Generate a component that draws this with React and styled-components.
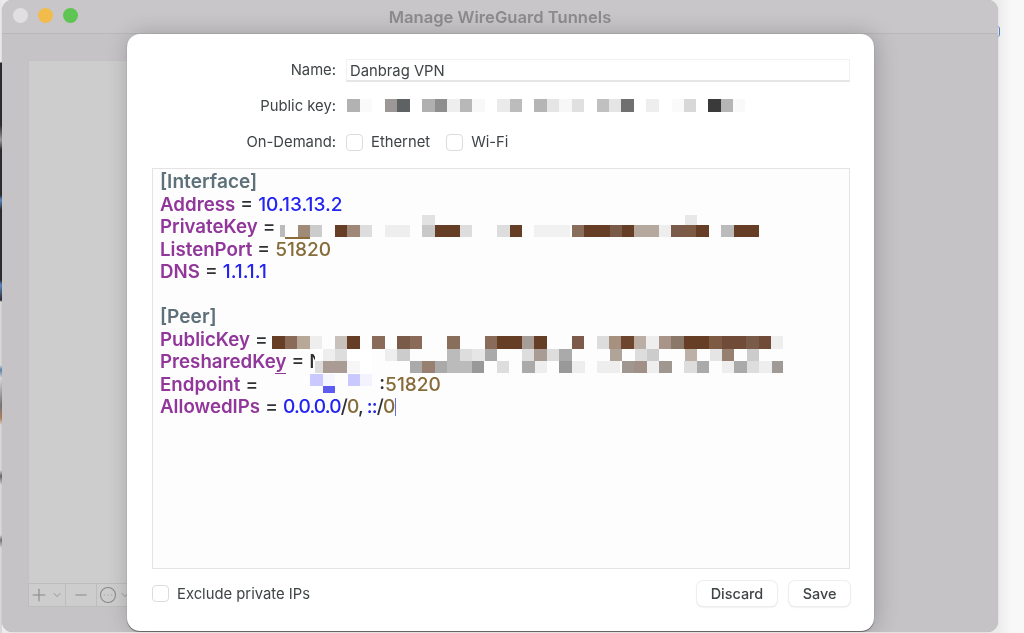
import React from "react";
import styled, { createGlobalStyle } from "styled-components";
import { Plus, Minus, ChevronDown, CircleEllipsis } from "lucide-react";

const Global = createGlobalStyle`
  html, body { margin: 0; padding: 0; background: #f7f7f7; }
  body { font-family: Inter, "Liberation Sans", sans-serif; }
`;

const Page = styled.div`
  position: relative;
  display: flex;
  width: 1024px;
  height: 633px;
  overflow: hidden;
  background: linear-gradient(90deg, #ececec 998px, #f8f8f8 1012px);
  filter: blur(0.45px);
`;

const DesktopStrip = styled.div`
  flex: 0 0 2px;
  height: 100%;
  background: linear-gradient(180deg,
    #e8e8e8 0, #e8e8e8 62px, #2c2c30 63px, #2c2c30 125px, #9a9a9a 140px, #2c2c30 150px,
    #2c2c30 195px, #5d8ac4 200px, #2c2c30 210px, #2c2c30 280px, #5d8ac4 285px, #2c2c30 300px,
    #d8d8d8 302px, #d8d8d8 365px, #5d82ac 370px, #d8d8d8 378px, #777 405px, #b0805c 418px,
    #d8d8d8 425px, #d8d8d8 470px, #666 476px, #d8d8d8 485px, #d8d8d8 535px, #777 540px, #d8d8d8 548px);
`;

const Window = styled.section`
  position: relative;
  flex: 0 0 996px;
  height: 632px;
  display: flex;
  flex-direction: column;
  box-sizing: border-box;
  background: #c5c3c6;
  border-radius: 11px;
  box-shadow: 0 0 1px rgba(0, 0, 0, 0.35);
  overflow: hidden;
`;

const TitleBar = styled.header`
  position: relative;
  flex: 0 0 33px;
  display: flex;
  align-items: center;
  justify-content: center;
  background: #c8c6c9;
  border-bottom: 1px solid #b9b7ba;
`;

const Lights = styled.div`
  position: absolute;
  left: 11px;
  top: 8px;
  display: flex;
  gap: 10px;
`;

const Light = styled.span`
  width: 15px;
  height: 15px;
  border-radius: 50%;
  background: ${(p) => p.$color};
`;

const Title = styled.h1`
  margin: 0;
  font-size: 16.6px;
  font-weight: 600;
  color: #8d8b8e;
`;

const WindowBody = styled.div`
  flex: 1;
  display: flex;
  padding: 26px 0 25px 26px;
`;

const Sidebar = styled.aside`
  width: 140px;
  display: flex;
  flex-direction: column;
  background: #cdcdcd;
  box-shadow: inset 1px 0 0 #c2c2c2, inset 0 1px 0 #c2c2c2;
`;

const SidebarList = styled.div`
  flex: 1;
`;

const SidebarTools = styled.div`
  flex: 0 0 22px;
  display: flex;
  color: #888888;
  border: 1px solid #bdbdbd;
  border-right: 0;
`;

const ToolButton = styled.div`
  flex: 0 0 ${(p) => p.$w}px;
  display: flex;
  align-items: center;
  justify-content: ${(p) => (p.$center ? "center" : "flex-start")};
  gap: 2px;
  padding-left: ${(p) => p.$pad || 0}px;
  box-sizing: border-box;
  border-right: 1px solid #bdbdbd;
`;

const Dialog = styled.div`
  position: absolute;
  left: 125px;
  top: 34px;
  width: 747px;
  height: 597px;
  box-sizing: border-box;
  padding: 25px 24px 25px 25px;
  display: flex;
  flex-direction: column;
  background: #fff;
  border-radius: 13px;
  box-shadow: 0 1px 1px rgba(60, 60, 60, 0.7), 2px 0 22px rgba(0, 0, 0, 0.22);
`;

const Form = styled.div`
  display: grid;
  grid-template-columns: 184px 1fr;
  column-gap: 10px;
  align-items: center;
  color: #3f4446;
  font-size: 14.8px;
`;

const Label = styled.label`
  text-align: right;
  height: ${(p) => p.$h}px;
  line-height: ${(p) => p.$h}px;
`;

const NameInput = styled.div`
  height: 23px;
  line-height: 23px;
  padding-left: 3px;
  box-sizing: border-box;
  border: 1px solid #f1f1f1;
  border-bottom: 2px solid #e6e6e6;
`;

const KeySlot = styled.div`
  height: 48px;
`;

const Options = styled.div`
  display: flex;
  align-items: center;
  height: 24px;
  gap: 8px;
`;

const Check = styled.span`
  flex: 0 0 17px;
  width: 17px;
  height: 17px;
  box-sizing: border-box;
  border: 1px solid #dcdcdc;
  border-radius: 4px;
  background: #fff;
`;

const OptionText = styled.span`
  margin-right: ${(p) => p.$gap || 0}px;
`;

const Editor = styled.div`
  margin-top: 14px;
  flex: 0 0 401px;
  box-sizing: border-box;
  padding: 1px 7px;
  border: 1px solid #e4e4e4;
  background: #fdfdfd;
  font-size: 19.1px;
  line-height: 22.5px;
  font-weight: 500;
  color: #2e3133;
  white-space: pre;
`;

const Line = styled.div`
  height: 22.5px;
`;

const Section = styled.span`
  color: #5e7079;
  font-weight: 600;
`;

const Key = styled.span`
  color: #91369a;
  font-weight: 600;
  font-size: 18.7px;
`;

const Addr = styled.span`
  color: #2424f2;
`;

const Port = styled.span`
  color: #866c3a;
`;

const EndpointPort = styled(Port)`
  margin-left: 116px;
`;

const Colon = styled.span`
  color: #2e3133;
`;

const RouteList = styled.span`
  letter-spacing: -0.85px;
`;

const Squiggle = styled.span`
  border-bottom: 1.5px solid #91369a;
`;

const Caret = styled.span`
  display: inline-block;
  width: 1px;
  height: 18px;
  margin-left: 1px;
  vertical-align: -3px;
  background: #5f6fe0;
`;

const Footer = styled.div`
  display: flex;
  align-items: center;
  margin-top: 12px;
  height: 26px;
  color: #3f4446;
  font-size: 14.8px;
`;

const FooterCheck = styled.div`
  flex: 1;
  display: flex;
  align-items: center;
  gap: 8px;
`;

const Button = styled.button`
  width: ${(p) => p.$w}px;
  height: 25px;
  margin-left: ${(p) => p.$gap || 0}px;
  padding: 0;
  border: 0;
  border-radius: 6px;
  background: #fff;
  color: #3f4446;
  font: 500 14.4px Inter, "Liberation Sans", sans-serif;
  box-shadow: 0 0 0 1px #eeeeee, 0 1px 2px rgba(0, 0, 0, 0.18);
`;

const EdgeMark = styled.span`
  position: absolute;
  left: 997px;
  top: 26px;
  width: 2px;
  height: 11px;
  border-right: 1px solid #4f7fc8;
  border-radius: 0 3px 3px 0;
`;

const Redactions = styled.svg`
  position: absolute;
  left: 0;
  top: 0;
  pointer-events: none;
`;

const B = "#663d25";
const bands = [
  [99, 13, [[347, 13, "#b2b2b2"], [360, 12, "#fafafa"], [385, 12, "#9c9898"], [397, 13, "#5f6262"], [422, 13, "#b0b0b0"], [435, 12, "#8e8e8e"], [447, 13, "#eeeeee"], [460, 12, "#b8b8b8"], [472, 13, "#f8f8f8"], [497, 13, "#eaeaea"], [510, 12, "#bcbcbc"], [534, 13, "#b5b5b5"], [547, 12, "#e5e5e5"], [559, 13, "#f7f7f7"], [572, 12, "#e0e0e0"], [597, 12, "#c0c0c0"], [609, 12, "#e5e5e5"], [621, 13, "#707070"], [646, 13, "#eeeeee"], [672, 12, "#fafafa"], [684, 12, "#d8d8d8"], [708, 13, "#3a3a3a"], [721, 12, "#b5b5b5"], [733, 12, "#f9f9f9"]]],
  [215, 10, [[422, 13, "#e2e2e2"], [685, 12, "#e8e8e8"]]],
  [225, 12, [[280, 5, "#bbbbbb"], [298, 12, "#a08a78"], [310, 12, "#cccccc"], [335, 12, B], [347, 13, "#a08878"], [360, 12, "#dddddd"], [385, 25, "#eeeeee"], [422, 13, "#c8c8c8"], [435, 25, B], [460, 12, "#dddddd"], [497, 13, "#dddddd"], [510, 12, B], [534, 36, "#f1f1f1"], [572, 12, "#8a6e5c"], [584, 26, B], [610, 12, "#7a5a48"], [622, 12, B], [634, 25, "#b5a89c"], [659, 12, "#eeeeee"], [671, 13, "#7a5a48"], [684, 12, "#7d5a44"], [696, 13, B], [721, 13, "#bbbbbb"], [734, 25, B]]],
  [237, 2, [[285, 25, "#8a6d3b"]]],
  [336, 13, [[272, 13, B], [285, 12, "#8a6a58"], [297, 13, "#b8a898"], [310, 12, "#eeeeee"], [335, 12, "#c8c0ba"], [347, 13, B], [372, 13, "#8a6a58"], [397, 13, "#7a5a48"], [410, 12, "#8a6a58"], [447, 13, "#8a6e5c"], [485, 12, "#8a6a58"], [497, 25, B], [522, 12, "#a89c96"], [534, 13, B], [572, 12, "#7d5a4a"], [597, 12, "#dddddd"], [609, 12, "#a89080"], [621, 13, "#6e4630"], [634, 12, "#bbaea4"], [646, 13, "#eeeeee"], [659, 12, "#a89488"], [671, 13, "#8c7868"], [684, 25, B], [709, 13, "#7d5a44"], [722, 24, "#704c38"], [746, 13, "#7a5a48"], [759, 12, "#704c38"], [771, 12, "#eeeeee"]]],
  [349, 25, [[315, 57, "#ffffff"]]],
  [349, 12, [[323, 12, "#eeeeee"], [335, 12, "#dddddd"], [385, 12, "#eeeeee"], [397, 13, "#cccccc"], [447, 13, "#bbbbbb"], [460, 12, "#dddddd"], [472, 13, "#e6e6e6"], [485, 12, "#aaaaaa"], [522, 12, "#dddddd"], [534, 13, "#a89c94"], [547, 12, "#dddddd"], [559, 13, "#aaaaaa"], [610, 12, "#b0a498"], [635, 12, "#dddddd"], [647, 12, "#cccccc"], [685, 12, "#bdb0a6"], [710, 12, "#e5e5e5"], [722, 12, "#978070"], [747, 12, "#cccccc"]]],
  [361, 12, [[315, 8, "#dddddd"], [323, 24, "#aa9c94"], [347, 13, "#f6f6f6"], [410, 12, "#aaaaaa"], [422, 13, "#97806f"], [435, 12, "#aaaaaa"], [447, 25, "#bbbbbb"], [472, 12, "#999999"], [497, 12, "#dddddd"], [522, 13, "#aaaaaa"], [535, 12, "#eeeeee"], [559, 13, "#999999"], [572, 13, "#eeeeee"], [597, 23, "#eeeeee"], [622, 12, "#a09890"], [634, 13, "#a09088"], [647, 12, "#eeeeee"], [659, 13, "#a09890"], [684, 13, "#dddddd"], [697, 12, "#aaaaaa"], [722, 12, "#eeeeee"], [734, 13, "#aaaaaa"], [747, 12, "#dddddd"], [759, 13, "#eeeeee"], [772, 11, "#a09a96"]]],
  [374, 12, [[310, 13, "#c9c9ff"], [323, 12, "#f6f6ff"], [348, 12, "#c9c9ff"], [360, 12, "#f3f3ff"]]],
  [386, 7, [[323, 12, "#5c5cf0"]]],
];

const Mosaic = () => (
  <Redactions width="1024" height="633" viewBox="0 0 1024 633" aria-hidden="true">
    {bands.map(([y, h, cells]) =>
      cells.map(([x, w, c]) => <rect key={`${x}-${y}`} x={x} y={y} width={w} height={h} fill={c} />)
    )}
  </Redactions>
);

export default function App() {
  return (
    <Page>
      <Global />
      <DesktopStrip />
      <Window>
        <TitleBar>
          <Lights>
            <Light $color="#e2dfe2" />
            <Light $color="#f2bc4c" />
            <Light $color="#5ec552" />
          </Lights>
          <Title>Manage WireGuard Tunnels</Title>
        </TitleBar>
        <WindowBody>
          <Sidebar>
            <SidebarList />
            <SidebarTools>
              <ToolButton $w={37}>
                <Plus size={20} strokeWidth={1.3} />
                <ChevronDown size={12} strokeWidth={1.6} />
              </ToolButton>
              <ToolButton $w={31} $center>
                <Minus size={18} strokeWidth={1.3} />
              </ToolButton>
              <ToolButton $w={40} $pad={2}>
                <CircleEllipsis size={18} strokeWidth={1.4} />
                <ChevronDown size={12} strokeWidth={1.6} />
              </ToolButton>
            </SidebarTools>
          </Sidebar>
        </WindowBody>
        <Dialog>
          <Form>
            <Label $h={23}>Name:</Label>
            <NameInput>Danbrag VPN</NameInput>
            <Label $h={48}>Public key:</Label>
            <KeySlot />
            <Label $h={24}>On-Demand:</Label>
            <Options>
              <Check />
              <OptionText $gap={8}>Ethernet</OptionText>
              <Check />
              <OptionText>Wi-Fi</OptionText>
            </Options>
          </Form>
          <Editor>
            <Line><Section>[Interface]</Section></Line>
            <Line><Key>Address</Key> = <Addr>10.13.13.2</Addr></Line>
            <Line><Key>PrivateKey</Key> = </Line>
            <Line><Key>ListenPort</Key> = <Port>51820</Port></Line>
            <Line><Key>DNS</Key> = <Addr>1.1.1.1</Addr></Line>
            <Line />
            <Line><Section>[Peer]</Section></Line>
            <Line><Key>PublicKey</Key> = </Line>
            <Line><Key>PresharedKe<Squiggle>y</Squiggle></Key> = N</Line>
            <Line><Key>Endpoint</Key> = <EndpointPort><Colon>:</Colon>51820</EndpointPort></Line>
            <Line><Key>AllowedIPs</Key> = <RouteList><Addr>0.0.0.0</Addr>/<Port>0</Port>, <Addr>::</Addr>/<Port>0</Port></RouteList><Caret /></Line>
          </Editor>
          <Footer>
            <FooterCheck>
              <Check />
              <span>Exclude private IPs</span>
            </FooterCheck>
            <Button $w={80}>Discard</Button>
            <Button $w={61} $gap={12}>Save</Button>
          </Footer>
        </Dialog>
      </Window>
      <EdgeMark />
      <Mosaic />
    </Page>
  );
}
